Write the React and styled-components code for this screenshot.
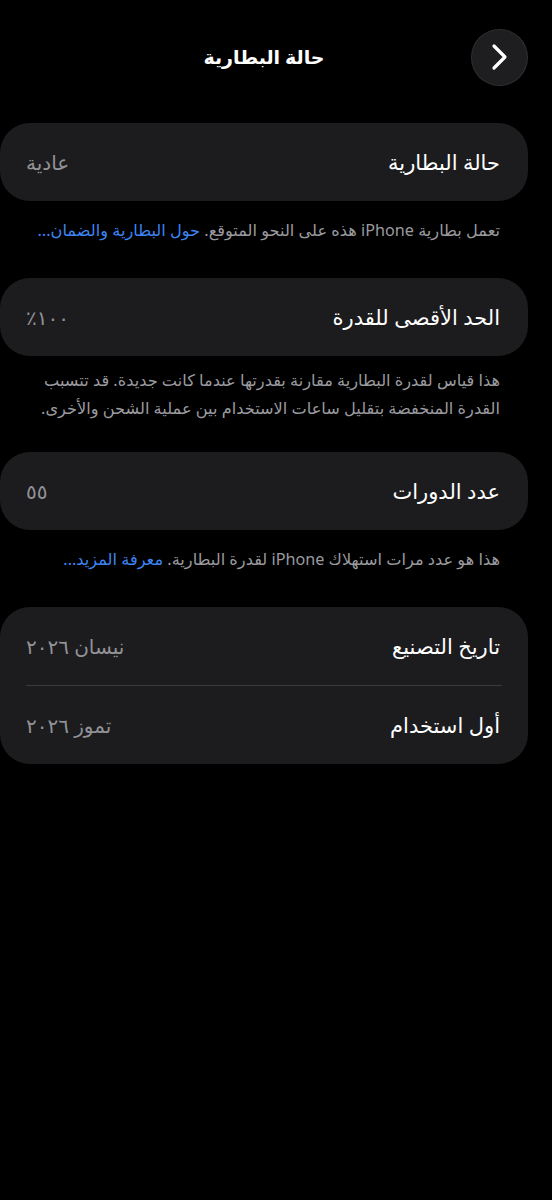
import React from 'react';
import styled, { createGlobalStyle, css } from 'styled-components';

const GlobalStyle = createGlobalStyle`
  html, body {
    margin: 0;
    padding: 0;
    background: #000;
  }
  body {
    font-family: "Noto Sans", "DejaVu Sans", sans-serif;
    -webkit-font-smoothing: antialiased;
  }
`;

const Page = styled.div`
  direction: rtl;
  width: 528px;
  min-height: 1172px;
  padding: 28px 24px 0 0;
  background: #000;
  color: #fff;
`;

const Header = styled.header`
  height: 58px;
  margin-bottom: 37px;
  display: grid;
  grid-template-columns: 57px 1fr 57px;
  align-items: center;
`;

const BackButton = styled.button`
  width: 57px;
  height: 57px;
  border-radius: 50%;
  border: 1px solid rgba(255, 255, 255, 0.08);
  background: #1e1e20;
  display: flex;
  align-items: center;
  justify-content: center;
  padding: 0;
  cursor: pointer;
`;

const Title = styled.h1`
  margin: 0;
  text-align: center;
  font-size: 19px;
  font-weight: 700;
  color: #fff;
`;

const Card = styled.section`
  background: #1c1c1e;
  border-radius: 30px;
  overflow: hidden;
`;

const Row = styled.div`
  height: 78px;
  padding: 0 28px 0 26px;
  display: flex;
  align-items: center;
  justify-content: space-between;
`;

const Label = styled.span`
  font-size: 21px;
  color: #fff;
`;

const Value = styled.span`
  font-size: 20px;
  color: #929297;
`;

const Divider = styled.div`
  height: 1px;
  margin: 0 26px;
  background: #3a3a3d;
`;

const Footer = styled.p`
  margin: 0;
  padding: 15px 28px 0 20px;
  margin-bottom: 34px;
  font-size: 16.2px;
  line-height: 28px;
  color: #9a9a9f;
  white-space: nowrap;

  ${props =>
    props.multi &&
    css`
      padding-top: 10px;
      margin-bottom: 30px;
    `}
`;

const Link = styled.a`
  color: #3d84f2;
  text-decoration: none;
`;

const Chevron = () => (
  <svg width="20" height="28" viewBox="0 0 20 28" fill="none">
    <path
      d="M4 3 L15 14 L4 25"
      stroke="#fff"
      strokeWidth="3.2"
      strokeLinecap="round"
      strokeLinejoin="round"
    />
  </svg>
);

const App = () => (
  <>
    <GlobalStyle />
    <Page>
      <Header>
        <BackButton aria-label="رجوع">
          <Chevron />
        </BackButton>
        <Title>حالة البطارية</Title>
        <span />
      </Header>

      <Card>
        <Row>
          <Label>حالة البطارية</Label>
          <Value>عادية</Value>
        </Row>
      </Card>
      <Footer>
        تعمل بطارية iPhone هذه على النحو المتوقع.{' '}
        <Link>حول البطارية والضمان...</Link>
      </Footer>

      <Card>
        <Row>
          <Label>الحد الأقصى للقدرة</Label>
          <Value>١٠٠٪</Value>
        </Row>
      </Card>
      <Footer multi>
        هذا قياس لقدرة البطارية مقارنة بقدرتها عندما كانت جديدة. قد تتسبب
        <br />
        القدرة المنخفضة بتقليل ساعات الاستخدام بين عملية الشحن والأخرى.
      </Footer>

      <Card>
        <Row>
          <Label>عدد الدورات</Label>
          <Value>٥٥</Value>
        </Row>
      </Card>
      <Footer>
        هذا هو عدد مرات استهلاك iPhone لقدرة البطارية.{' '}
        <Link>معرفة المزيد...</Link>
      </Footer>

      <Card>
        <Row>
          <Label>تاريخ التصنيع</Label>
          <Value>نيسان ٢٠٢٦</Value>
        </Row>
        <Divider />
        <Row>
          <Label>أول استخدام</Label>
          <Value>تموز ٢٠٢٦</Value>
        </Row>
      </Card>
    </Page>
  </>
);

export default App;
